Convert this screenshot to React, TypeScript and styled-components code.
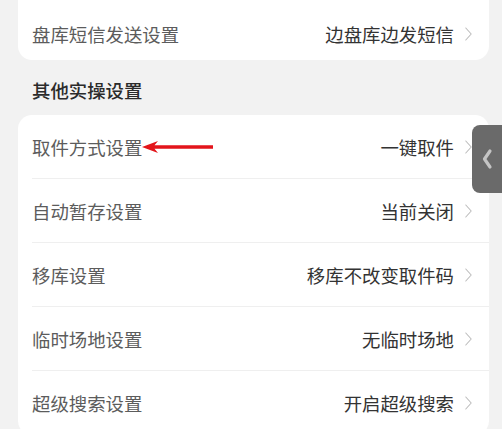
import React from "react";
import styled, { createGlobalStyle } from "styled-components";

const GlobalStyle = createGlobalStyle`
  html, body {
    margin: 0;
    padding: 0;
    background: #f2f2f2;
    overflow: hidden;
  }
  body {
    font-family: "Noto Sans CJK SC", "Noto Sans", sans-serif;
  }
`;

const Page = styled.div`
  position: relative;
  width: 502px;
  height: 429px;
  overflow: hidden;
  background: #f2f2f2;
  padding: 0 13px 0 18px;
  box-sizing: border-box;
`;

const Card = styled.div<{ $flatTop?: boolean }>`
  background: #ffffff;
  border-radius: ${(p) => (p.$flatTop ? "0 0 14px 14px" : "14px")};
  padding-left: 14px;
  overflow: hidden;
`;

const Row = styled.div<{ $last?: boolean; $top?: number; $height?: number }>`
  height: ${(p) => p.$height ?? 64}px;
  padding-top: ${(p) => p.$top ?? 0}px;
  display: flex;
  align-items: center;
  padding-right: 16px;
  box-sizing: border-box;
  border-bottom: ${(p) => (p.$last ? "none" : "1px solid #efefef")};
`;

const Label = styled.span`
  display: flex;
  align-items: center;
  flex: 1;
  font-size: 18.4px;
  color: #5c5c5c;
`;

const Value = styled.span`
  font-size: 18.4px;
  color: #333333;
  margin-right: 10px;
`;

const SectionTitle = styled.div`
  padding: 17px 0 12px 14px;
  line-height: 26px;
  font-size: 18.4px;
  font-weight: 500;
  color: #2b2b2b;
`;

const Arrow = styled.svg`
  margin-top: 1px;
`;

const Chevron = () => (
  <svg width="9" height="16" viewBox="0 0 9 16">
    <path d="M1.8 2 L7.2 8 L1.8 14" fill="none" stroke="#bdbdbd" strokeWidth="1.1" strokeLinecap="round" strokeLinejoin="round" />
  </svg>
);

const SideTab = styled.div`
  position: absolute;
  right: 0;
  top: 125px;
  width: 30px;
  height: 68px;
  background: #6a6a6a;
  border-radius: 8px 0 0 8px;
  display: flex;
  align-items: center;
  justify-content: center;
`;

type Item = { label: string; value: string; arrow?: boolean };

const items: Item[] = [
  { label: "取件方式设置", value: "一键取件", arrow: true },
  { label: "自动暂存设置", value: "当前关闭" },
  { label: "移库设置", value: "移库不改变取件码" },
  { label: "临时场地设置", value: "无临时场地" },
  { label: "超级搜索设置", value: "开启超级搜索" },
];

export default function App() {
  return (
    <>
      <GlobalStyle />
      <Page>
        <Card $flatTop>
          <Row $last $top={7} $height={60}>
            <Label>盘库短信发送设置</Label>
            <Value>边盘库边发短信</Value>
            <Chevron />
          </Row>
        </Card>
        <SectionTitle>其他实操设置</SectionTitle>
        <Card>
          {items.map((it, i) => (
            <Row key={it.label} $last={i === items.length - 1}>
              <Label>
                {it.label}
                {it.arrow && (
                  <Arrow width="72" height="14" viewBox="0 0 72 14">
                    <path d="M0 7 L16 1 L12.5 5.3 L71 5.3 L71 8.7 L12.5 8.7 L16 13 Z" fill="#e3151b" />
                  </Arrow>
                )}
              </Label>
              <Value>{it.value}</Value>
              <Chevron />
            </Row>
          ))}
        </Card>
        <SideTab>
          <svg width="12" height="22" viewBox="0 0 12 22">
            <path d="M9 3 L3.5 11 L9 19" fill="none" stroke="#c4c4c4" strokeWidth="3.2" strokeLinecap="round" strokeLinejoin="round" />
          </svg>
        </SideTab>
      </Page>
    </>
  );
}
